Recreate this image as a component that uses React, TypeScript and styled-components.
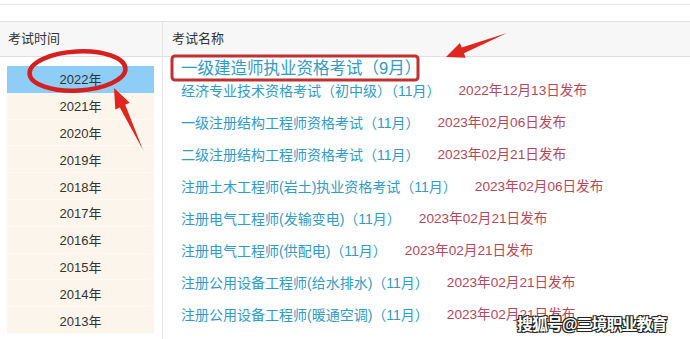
import React from 'react';
import styled, { createGlobalStyle } from 'styled-components';

const GlobalStyle = createGlobalStyle`
  html, body {
    margin: 0;
    padding: 0;
    background: #fff;
  }
  body {
    font-family: "Liberation Sans", "Noto Sans CJK SC", sans-serif;
  }
`;

const years = [2022, 2021, 2020, 2019, 2018, 2017, 2016, 2015, 2014, 2013];

const exams = [
  { name: '经济专业技术资格考试（初中级）（11月）', date: '2022年12月13日发布' },
  { name: '一级注册结构工程师资格考试（11月）', date: '2023年02月06日发布' },
  { name: '二级注册结构工程师资格考试（11月）', date: '2023年02月21日发布' },
  { name: '注册土木工程师(岩土)执业资格考试（11月）', date: '2023年02月06日发布' },
  { name: '注册电气工程师(发输变电)（11月）', date: '2023年02月21日发布' },
  { name: '注册电气工程师(供配电)（11月）', date: '2023年02月21日发布' },
  { name: '注册公用设备工程师(给水排水)（11月）', date: '2023年02月21日发布' },
  { name: '注册公用设备工程师(暖通空调)（11月）', date: '2023年02月21日发布' },
];

export default function App() {
  return (
    <Page>
      <GlobalStyle />
      <TopRule />
      <Table>
        <HeadCell $divider>考试时间</HeadCell>
        <HeadCell>考试名称</HeadCell>
        <YearColumn>
          {years.map((y, i) => (
            <YearRow key={y} $active={i === 0}>
              {y}年
            </YearRow>
          ))}
        </YearColumn>
        <ExamColumn>
          <Featured href="#">一级建造师执业资格考试（9月）</Featured>
          {exams.map((e) => (
            <ExamRow key={e.name}>
              <ExamLink href="#">{e.name}</ExamLink>
              <ExamDate>{e.date}</ExamDate>
            </ExamRow>
          ))}
        </ExamColumn>
      </Table>

      <Marks width="690" height="339" viewBox="0 0 690 339">
        <ellipse
          cx="77.5"
          cy="71"
          rx="48"
          ry="19.5"
          fill="none"
          stroke="#d6201f"
          strokeWidth="4.5"
          transform="rotate(-3 77.5 71)"
        />
        <rect
          x="172"
          y="56"
          width="246"
          height="24"
          rx="3"
          fill="none"
          stroke="#bd3131"
          strokeWidth="3"
        />
        <polygon
          points="507,33 461.7,47.6 459.9,43 446,57 465.7,57.8 463.9,53.2"
          fill="#e0261e"
        />
        <polygon
          points="143,150 125.2,104.8 129.7,102.7 114,88 115.3,109.5 119.8,107.4"
          fill="#e0261e"
        />
      </Marks>
      <Watermark>搜狐号@三境职业教育</Watermark>
    </Page>
  );
}

const Page = styled.div`
  position: relative;
  width: 690px;
  height: 339px;
  overflow: hidden;
  background: #fff;
`;

const TopRule = styled.div`
  height: 4px;
  border-bottom: 1px solid #e4e4e4;
  margin-bottom: 16px;
`;

const Table = styled.div`
  display: grid;
  grid-template-columns: 163px 1fr;
  grid-template-rows: 35px 1fr;
  border-top: 1px solid #e0e0e0;
  height: 318px;
`;

const HeadCell = styled.div<{ $divider?: boolean }>`
  display: flex;
  align-items: center;
  padding-left: ${(p) => (p.$divider ? '8px' : '9px')};
  padding-bottom: 3px;
  background: #f7f7f7;
  border-bottom: 1px solid #e0e0e0;
  border-right: ${(p) => (p.$divider ? '1px solid #e6e6e6' : 'none')};
  font-size: 13px;
  color: #333;
`;

const YearColumn = styled.div`
  display: flex;
  flex-direction: column;
  padding: 9px 8px 0 7px;
  border-right: 1px solid #e6e6e6;
`;

const YearRow = styled.div<{ $active?: boolean }>`
  height: 25.8px;
  display: flex;
  align-items: center;
  justify-content: center;
  background: ${(p) => (p.$active ? '#8ecdf6' : '#fcf5ec')};
  border-bottom: 1px solid ${(p) => (p.$active ? '#8ecdf6' : '#fffaf5')};
  font-size: 13px;
  color: #333;
`;

const ExamColumn = styled.div`
  display: flex;
  flex-direction: column;
  align-items: flex-start;
  padding-left: 18px;
`;

const Featured = styled.a`
  line-height: 22px;
  font-size: 16.5px;
  color: #2f9bc8;
  text-decoration: none;
`;

const ExamRow = styled.div`
  display: flex;
  align-items: center;
  line-height: 22px;
  margin-top: 1px;
  margin-bottom: 9px;
  font-size: 14px;
`;

const ExamLink = styled.a`
  color: #2f9bc8;
  text-decoration: none;
`;

const ExamDate = styled.span`
  margin-left: 18px;
  color: #b5485a;
  font-size: 13.6px;
`;

const Marks = styled.svg`
  position: absolute;
  left: 0;
  top: 0;
  pointer-events: none;
`;

const Watermark = styled.div`
  position: absolute;
  left: 517px;
  top: 311px;
  font-size: 16px;
  font-weight: 700;
  color: #fff;
  letter-spacing: -1px;
  text-shadow: -1px -1px 0 #222, 1px -1px 0 #222, -1px 1px 0 #222, 1px 1px 0 #222,
    0 0 2px #000;
`;
